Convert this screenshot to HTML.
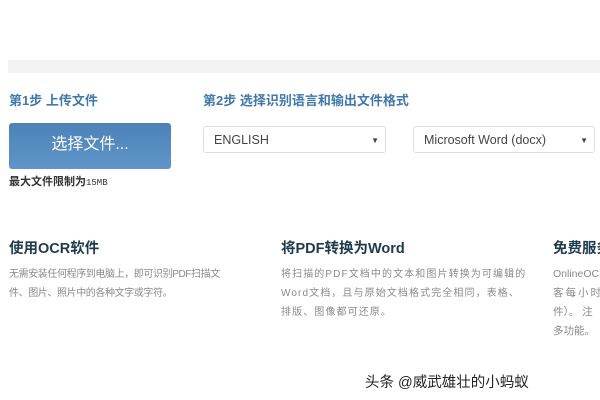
<!DOCTYPE html>
<html><head><meta charset="utf-8"><style>
body{margin:0;width:600px;height:400px;background:#fff;position:relative;overflow:hidden;font-family:"Liberation Sans","Noto Sans CJK SC",sans-serif}
.a{position:absolute;white-space:nowrap;overflow:hidden}
.band{position:absolute;left:8px;top:60px;width:592px;height:13px;background:#f3f3f3}
.h1{color:#3f78ad;font-weight:bold;font-size:13px}
.btn{position:absolute;left:9px;top:123px;width:162px;height:46px;border-radius:3px;background:linear-gradient(#4d82b9,#5f95c8);color:#fff;font-size:16px;text-align:center;line-height:44px}
.sel{position:absolute;top:126px;height:27px;border:1px solid #ddd;border-radius:3px;font-size:12.5px;color:#444;line-height:27px;padding-left:10px;box-sizing:border-box}
.sel span{position:absolute;right:6px;top:0;font-size:8px;color:#444}
.h2{color:#1e3a4c;font-weight:bold;font-size:14.5px;top:237px}
.p{color:#8a8a8a;font-size:10px;line-height:19px;top:265px}
</style></head><body>
<div class="band"></div>
<div class="a h1" style="left:9px;top:90px">第1步 上传文件</div>
<div class="a h1" style="left:203px;top:90px">第2步 选择识别语言和输出文件格式</div>
<div class="btn">选择文件...</div>
<div class="a" style="left:9px;top:173px;font-size:11px;font-weight:bold;color:#333">最大文件限制为<span style="font-family:'Liberation Mono',monospace;font-weight:normal;font-size:9px">15MB</span></div>
<div class="sel" style="left:203px;width:183px">ENGLISH<span>▼</span></div>
<div class="sel" style="left:413px;width:182px">Microsoft Word (docx)<span>▼</span></div>
<div class="a h2" style="left:9px">使用OCR软件</div>
<div class="a h2" style="left:281px">将PDF转换为Word</div>
<div class="a h2" style="left:553px;width:47px">免费服务</div>
<div class="a p" style="left:9px;letter-spacing:-0.4px">无需安装任何程序到电脑上，即可识别PDF扫描文<br>件、图片、照片中的各种文字或字符。</div>
<div class="a p" style="left:281px;letter-spacing:1.1px">将扫描的PDF文档中的文本和图片转换为可编辑的<br>Word文档，且与原始文档格式完全相同，表格、<br>排版、图像都可还原。</div>
<div class="a p" style="left:553px;width:47px;font-size:10.5px">OnlineOCR<br><span style="letter-spacing:2px">客每小时</span><br>件）。 注<br>多功能。</div>
<div class="a" style="left:365px;top:371px;font-size:14.5px;color:#222">头条 @威武雄壮的小蚂蚁</div>
</body></html>
